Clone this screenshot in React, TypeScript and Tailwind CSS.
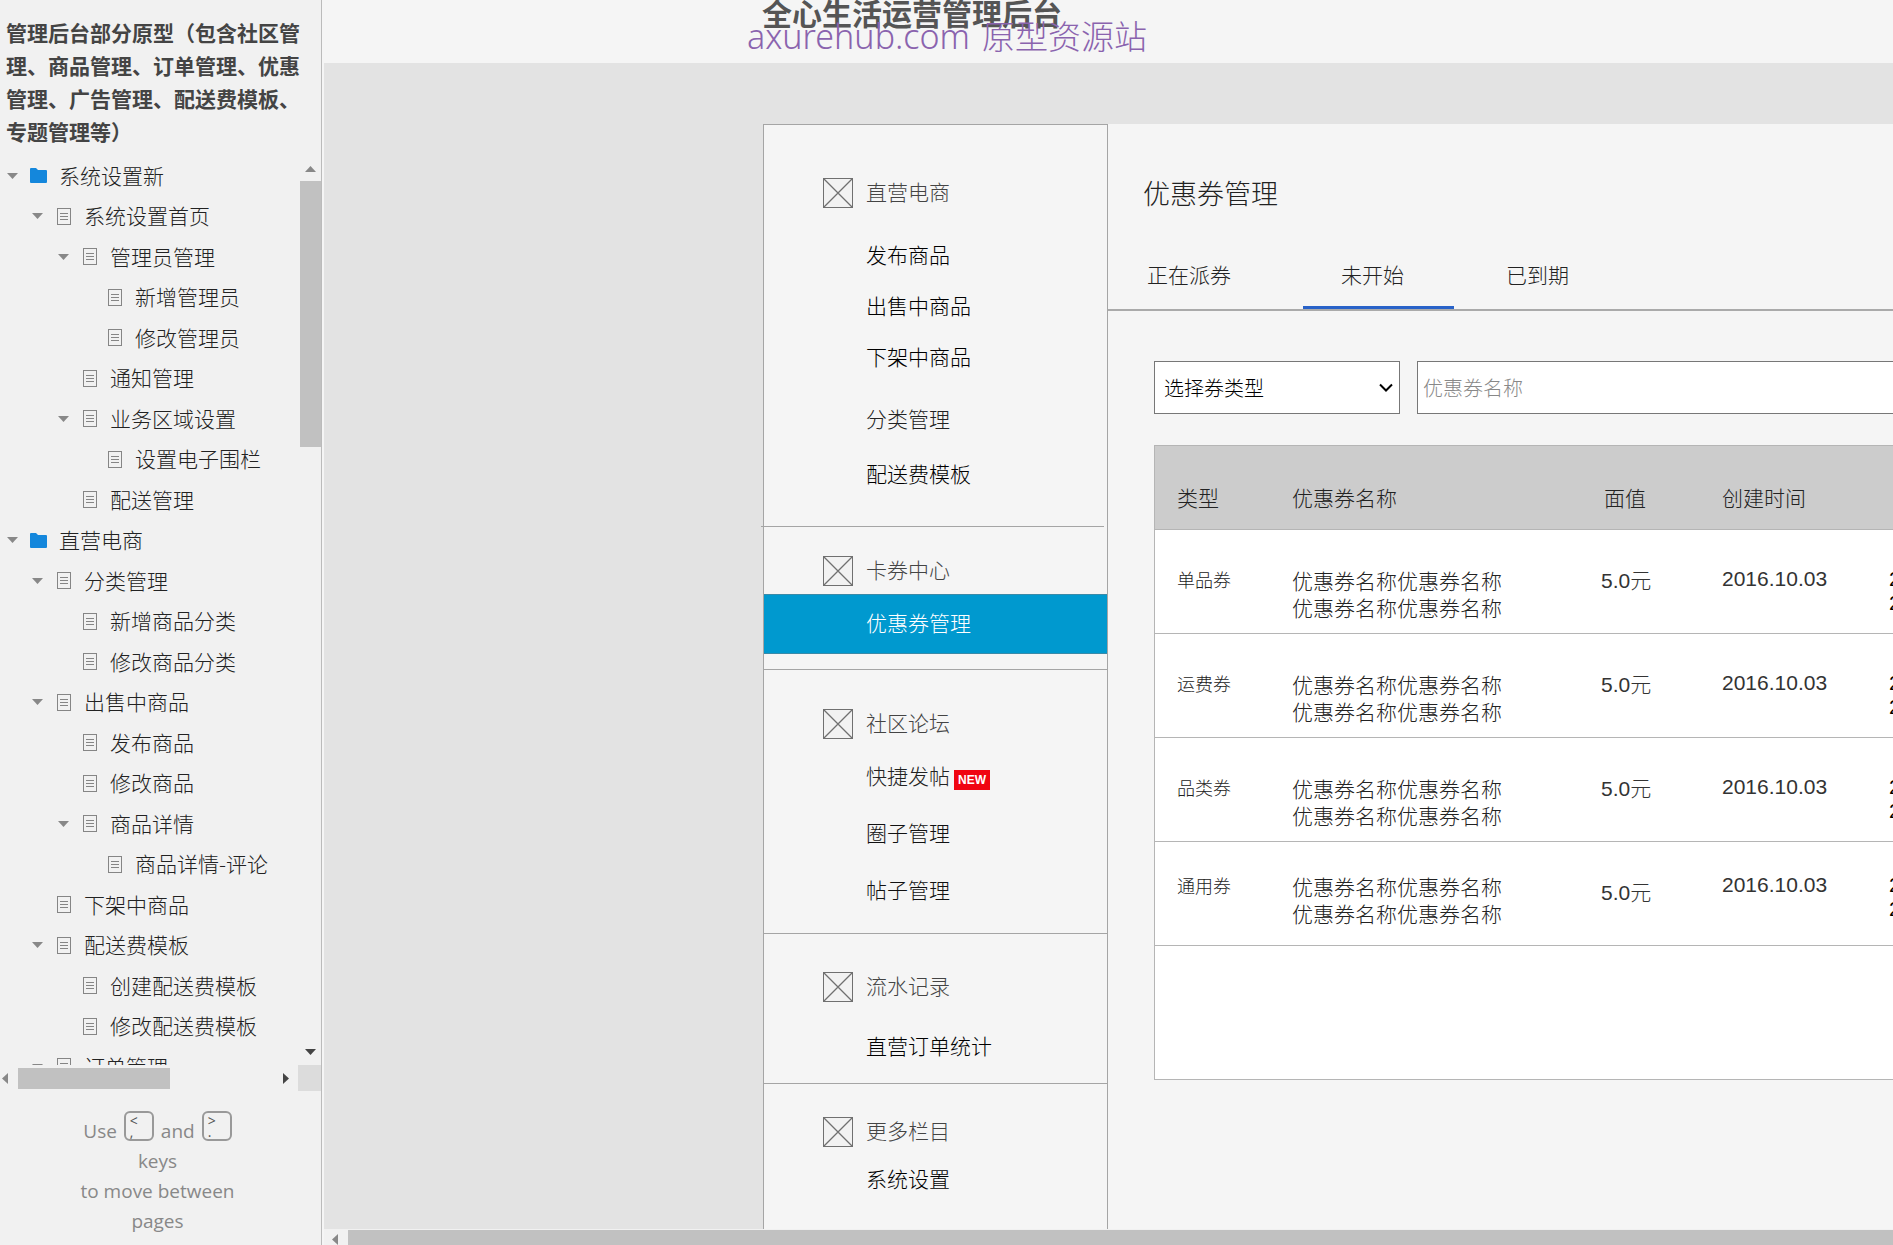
type TreeNode = { level: 0 | 1 | 2 | 3; label: string; open?: boolean };

const tree: TreeNode[] = [
  { level: 0, label: "系统设置新", open: true },
  { level: 1, label: "系统设置首页", open: true },
  { level: 2, label: "管理员管理", open: true },
  { level: 3, label: "新增管理员" },
  { level: 3, label: "修改管理员" },
  { level: 2, label: "通知管理" },
  { level: 2, label: "业务区域设置", open: true },
  { level: 3, label: "设置电子围栏" },
  { level: 2, label: "配送管理" },
  { level: 0, label: "直营电商", open: true },
  { level: 1, label: "分类管理", open: true },
  { level: 2, label: "新增商品分类" },
  { level: 2, label: "修改商品分类" },
  { level: 1, label: "出售中商品", open: true },
  { level: 2, label: "发布商品" },
  { level: 2, label: "修改商品" },
  { level: 2, label: "商品详情", open: true },
  { level: 3, label: "商品详情-评论" },
  { level: 1, label: "下架中商品" },
  { level: 1, label: "配送费模板", open: true },
  { level: 2, label: "创建配送费模板" },
  { level: 2, label: "修改配送费模板" },
  { level: 1, label: "订单管理", open: true },
];

const indent = ["pl-[7px]", "pl-[32px]", "pl-[58px]", "pl-[83px]"];

type NavItem = { label: string; gap: string; tone: string; badge?: string; active?: boolean };
type NavGroup = { title: string; pad: string; rule?: string; items: NavItem[] };

const nav: NavGroup[] = [
  {
    title: "直营电商",
    pad: "pt-[53px] pb-9",
    rule: "-ml-[3px] mr-[3px]",
    items: [
      { label: "发布商品", gap: "mt-[33px]", tone: "text-black" },
      { label: "出售中商品", gap: "mt-[21px]", tone: "text-black" },
      { label: "下架中商品", gap: "mt-[21px]", tone: "text-black" },
      { label: "分类管理", gap: "mt-8", tone: "text-[#222]" },
      { label: "配送费模板", gap: "mt-[25px]", tone: "text-black" },
    ],
  },
  {
    title: "卡券中心",
    pad: "pt-[29px] pb-[15px]",
    rule: "",
    items: [{ label: "优惠券管理", gap: "mt-2", tone: "text-white", active: true }],
  },
  {
    title: "社区论坛",
    pad: "pt-[39px] pb-[27px]",
    rule: "",
    items: [
      { label: "快捷发帖", gap: "mt-[23px]", tone: "text-[#222]", badge: "NEW" },
      { label: "圈子管理", gap: "mt-[27px]", tone: "text-[#111]" },
      { label: "帖子管理", gap: "mt-[27px]", tone: "text-[#111]" },
    ],
  },
  {
    title: "流水记录",
    pad: "pt-[38px] pb-[21px]",
    rule: "",
    items: [{ label: "直营订单统计", gap: "mt-[30px]", tone: "text-black" }],
  },
  {
    title: "更多栏目",
    pad: "pt-[33px] pb-8",
    items: [{ label: "系统设置", gap: "mt-[18px]", tone: "text-black" }],
  },
];

const coupons = [
  { type: "单品券", typePad: "pt-[36px]", namePad: "pt-[37px]", datePad: "pt-[35px]" },
  { type: "运费券", typePad: "pt-[36px]", namePad: "pt-[37px]", datePad: "pt-[35px]" },
  { type: "品类券", typePad: "pt-[36px]", namePad: "pt-[37px]", datePad: "pt-[35px]" },
  { type: "通用券", typePad: "pt-[30px]", namePad: "pt-[31px]", datePad: "pt-[29px]" },
];

function Triangle({ dir, className }: { dir: "up" | "down" | "left" | "right"; className: string }) {
  const points = {
    up: "0,6 5.5,0 11,6",
    down: "0,0 11,0 5.5,6",
    left: "6,0 6,11 0,5.5",
    right: "0,0 6,5.5 0,11",
  }[dir];
  const vertical = dir === "up" || dir === "down";
  return (
    <svg
      className={className}
      width={vertical ? 11 : 6}
      height={vertical ? 6 : 11}
      viewBox={vertical ? "0 0 11 6" : "0 0 6 11"}
      fill="currentColor"
      aria-hidden="true"
    >
      <polygon points={points} />
    </svg>
  );
}

function FolderIcon() {
  return (
    <svg width="17" height="15" viewBox="0 0 17 15" fill="#1487dc" aria-hidden="true">
      <path d="M0 1Q0 0 1 0H6L8 2H16Q17 2 17 3V14Q17 15 16 15H1Q0 15 0 14Z" />
    </svg>
  );
}

function PageIcon() {
  return (
    <svg width="14" height="17" viewBox="0 0 14 17" fill="none" stroke="#858585" aria-hidden="true">
      <rect x="0.5" y="0.5" width="13" height="16" />
      <path d="M3 5.5H11M3 8.5H11M3 11.5H11" />
    </svg>
  );
}

function PlaceholderIcon() {
  return (
    <svg
      className="shrink-0"
      width="30"
      height="30"
      viewBox="0 0 30 30"
      fill="#f2f2f2"
      stroke="#707070"
      aria-hidden="true"
    >
      <rect x="0.5" y="0.5" width="29" height="29" />
      <path d="M0.5 0.5L29.5 29.5M29.5 0.5L0.5 29.5" strokeWidth="1.25" />
    </svg>
  );
}

function Key({ top, bottom }: { top: string; bottom: string }) {
  return (
    <kbd className="flex h-[30px] w-[30px] flex-col rounded-md border-2 border-[#999] pl-1 text-left font-['Open_Sans',sans-serif] text-[14px] leading-[11px] text-[#555]">
      <span className="pt-[2px]">{top}</span>
      <span>{bottom}</span>
    </kbd>
  );
}

function Sidebar() {
  return (
    <aside className="flex w-[322px] shrink-0 flex-col border-r border-[#bbb] bg-[#f1f1f1]">
      <h1 className="w-[309px] shrink-0 pt-4 pl-[6px] text-[21px] leading-[33px] font-bold text-[#444]">
        管理后台部分原型（包含社区管理、商品管理、订单管理、优惠管理、广告管理、配送费模板、专题管理等）
      </h1>
      <div className="mt-[7px] flex min-h-0 flex-1">
        <ul className="min-w-0 flex-1 overflow-hidden text-[21px] font-light text-[#222]">
          {tree.map((node, i) => (
            <li key={i} className={`flex h-[41px] items-center even:h-10 ${indent[node.level]}`}>
              <span className="w-[23px] shrink-0 text-[#888]">
                {node.open && <Triangle dir="down" className="block" />}
              </span>
              <span className="flex w-[17px] shrink-0 justify-center">
                {node.level === 0 ? <FolderIcon /> : <PageIcon />}
              </span>
              <a href="#" className="ml-3 whitespace-nowrap">
                {node.label}
              </a>
            </li>
          ))}
        </ul>
        <div className="flex w-[21px] flex-col items-center pt-[11px] pb-[10px]">
          <Triangle dir="up" className="text-[#888]" />
          <div className="mt-[9px] h-[266px] w-full bg-[#c1c1c1]" />
          <Triangle dir="down" className="mt-auto text-[#444]" />
        </div>
      </div>
      <div className="flex h-[26px] shrink-0 items-center pl-[2px]">
        <Triangle dir="left" className="text-[#888]" />
        <div className="ml-[10px] h-[21px] w-[152px] bg-[#c1c1c1]" />
        <Triangle dir="right" className="ml-auto text-[#444]" />
        <div className="ml-[9px] h-full w-[23px] bg-[#dcdcdc]" />
      </div>
      <p className="mr-[6px] h-[154px] shrink-0 pt-5 text-center font-['Open_Sans','Noto_Sans_CJK_SC',sans-serif] text-[19px] leading-[30px] text-[#888]">
        <span className="flex justify-center gap-[7px]">
          <span className="pt-[5px]">Use</span>
          <Key top="<" bottom="," />
          <span className="pt-[5px]">and</span>
          <Key top=">" bottom="." />
        </span>
        keys
        <br />
        to move between
        <br />
        pages
      </p>
    </aside>
  );
}

function Nav() {
  return (
    <nav className="w-[345px] shrink-0 border border-b-0 border-[#a5a5a5] bg-[#f5f5f5] text-[21px] leading-[27px] font-light">
      {nav.map((group) => (
        <section key={group.title}>
          <div className={group.pad}>
            <h2 className="flex h-[30px] items-center gap-[13px] pl-[59px] text-[#444]">
              <PlaceholderIcon />
              <span className="pb-[3px]">{group.title}</span>
            </h2>
            <ul>
              {group.items.map((item) => (
                <li
                  key={item.label}
                  className={`flex items-center pl-[102px] ${item.gap} ${item.tone} ${
                    item.active ? "h-[60px] border-y border-[#3a8aa8] bg-[#0099cf]" : "h-[30px]"
                  }`}
                >
                  <a href="#" className="pb-[3px]">
                    {item.label}
                  </a>
                  {item.badge && (
                    <span className="mt-[5px] ml-1 h-5 w-9 bg-[#f00512] text-center font-['Liberation_Sans',sans-serif] text-xs leading-5 font-bold text-white">
                      {item.badge}
                    </span>
                  )}
                </li>
              ))}
            </ul>
          </div>
          {group.rule !== undefined && <hr className={`border-[#a5a5a5] ${group.rule}`} />}
        </section>
      ))}
    </nav>
  );
}

function CouponTable() {
  return (
    <div className="h-[635px] w-[1100px] border border-[#b5b5b5] bg-white">
      <table className="w-full table-fixed border-collapse text-left text-[21px] leading-[27px] font-light text-[#222]">
        <colgroup>
          <col className="w-[137px]" />
          <col className="w-[309px]" />
          <col className="w-[121px]" />
          <col className="w-[167px]" />
          <col />
        </colgroup>
        <thead>
          <tr className="h-[83px] border-b border-[#b5b5b5] bg-[#ccc] align-top">
            <th className="pt-[38px] pl-[22px] font-light">类型</th>
            <th className="pt-[38px] font-light">优惠券名称</th>
            <th className="pt-[38px] pl-[3px] font-light">面值</th>
            <th className="pt-[38px] font-light">创建时间</th>
            <td />
          </tr>
        </thead>
        <tbody>
          {coupons.map((c) => (
            <tr key={c.type} className="h-[104px] border-b border-[#b5b5b5] align-top">
              <td className={`pl-[22px] text-lg leading-[27px] ${c.typePad}`}>{c.type}</td>
              <td className={c.namePad}>
                优惠券名称优惠券名称
                <br />
                优惠券名称优惠券名称
              </td>
              <td className="pt-[37px] font-['Liberation_Sans','Noto_Sans_CJK_SC',sans-serif] text-[#333]">5.0元</td>
              <td className={`font-['Liberation_Sans',sans-serif] text-[#333] ${c.datePad}`}>2016.10.03</td>
              <td className={`font-['Liberation_Sans',sans-serif] leading-6 text-black ${c.namePad}`}>
                2016.10.03
                <br />
                2016.10.03
              </td>
            </tr>
          ))}
        </tbody>
      </table>
    </div>
  );
}

function Panel() {
  return (
    <main className="min-w-0 flex-1 overflow-hidden bg-[#f5f5f5]">
      <h2 className="pt-12 pl-[35px] text-[27px] leading-[42px] font-light text-[#222]">优惠券管理</h2>
      <div role="tablist" className="mt-[39px] flex h-[58px] border-b-2 border-[#aaa] text-[21px] leading-[30px] text-[#222]">
        <button role="tab" className="w-[195px] pb-[15px] pl-[39px] text-left font-light">
          正在派券
        </button>
        <button role="tab" aria-selected="true" className="w-[151px] border-b-[3px] border-[#2862c8] pr-3 pb-3 font-light">
          未开始
        </button>
        <button role="tab" className="pb-[15px] pl-[52px] font-light">
          已到期
        </button>
      </div>
      <form className="mt-[50px] flex gap-[17px] pl-[46px] text-[20px]">
        <div className="relative">
          <select
            aria-label="券类型"
            className="h-[53px] w-[246px] appearance-none rounded-none border border-[#777] bg-white pl-[9px] font-light text-black"
          >
            <option>选择券类型</option>
          </select>
          <svg
            className="pointer-events-none absolute top-[22px] right-[7px]"
            width="14"
            height="9"
            viewBox="0 0 14 9"
            fill="none"
            stroke="#000"
            strokeWidth="2"
            aria-hidden="true"
          >
            <path d="M1 1.5L7 7.5L13 1.5" />
          </svg>
        </div>
        <input
          type="text"
          aria-label="优惠券名称"
          placeholder="优惠券名称"
          className="h-[53px] w-[700px] shrink-0 border border-[#777] bg-white pl-[5px] font-light placeholder:text-[#888]"
        />
      </form>
      <div className="mt-[31px] pl-[46px]">
        <CouponTable />
      </div>
    </main>
  );
}

export default function App() {
  return (
    <div className="flex h-screen overflow-hidden bg-[#f5f5f5] font-['Noto_Sans_CJK_SC',sans-serif]">
      <Sidebar />
      <div className="ml-[2px] flex min-w-0 flex-1 flex-col">
        <header className="relative h-[63px] shrink-0 pl-[438px]">
          <h1 className="-mt-[10px] text-[30px] leading-[44px] font-bold text-[#555]">全心生活运营管理后台</h1>
          <p className="absolute top-[13px] left-[423px] flex items-baseline gap-3 text-[33px] leading-[44px] font-light whitespace-nowrap text-[#8a63ae]">
            <span className="font-['Noto_Sans',sans-serif] text-[34px]">axurehub.com</span>
            <span>原型资源站</span>
          </p>
        </header>
        <div className="flex min-h-0 flex-1 overflow-hidden bg-[#e3e3e3] pt-[61px] pl-[439px]">
          <Nav />
          <Panel />
        </div>
        <div className="flex h-4 shrink-0 overflow-hidden bg-[#f1f1f1] pt-px">
          <Triangle dir="left" className="mt-1 ml-2 text-[#888]" />
          <div className="ml-[10px] h-full flex-1 bg-[#c1c1c1]" />
        </div>
      </div>
    </div>
  );
}
